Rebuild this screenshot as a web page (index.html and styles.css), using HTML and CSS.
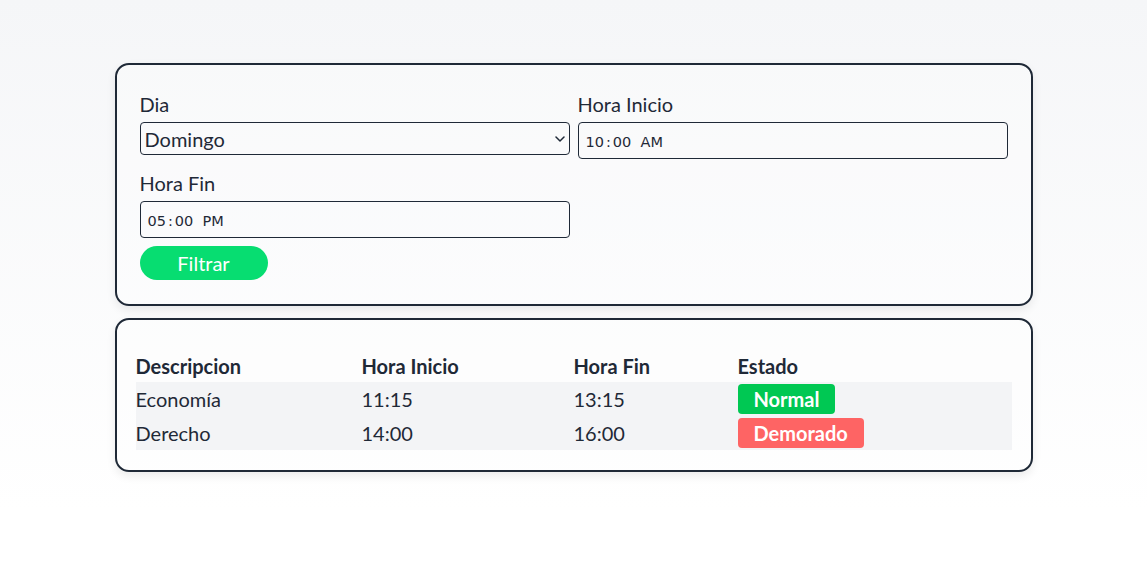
FILE: index.html
```html
<!DOCTYPE html>
<html lang="es">
<head>
<meta charset="utf-8">
<title>Horarios</title>
<link rel="stylesheet" href="styles.css">
</head>
<body>
<main class="page">
  <section class="card filter-card">
    <form class="filter-form">
      <div class="field">
        <label class="label" for="dia">Dia</label>
        <div class="select-wrap">
          <select id="dia" class="select">
            <option>Domingo</option>
            <option>Lunes</option>
          </select>
          <svg class="chev" width="10" height="6" viewBox="0 0 10 6"><path d="M1 1l4 4 4-4" fill="none" stroke="#1f2937" stroke-width="1.5" stroke-linecap="round" stroke-linejoin="round"/></svg>
        </div>
      </div>
      <div class="field">
        <label class="label" for="ini">Hora Inicio</label>
        <div class="input">10<span class="sep">:</span>00&nbsp;&nbsp;AM</div>
      </div>
      <div class="field">
        <label class="label" for="fin">Hora Fin</label>
        <div class="input">05<span class="sep">:</span>00&nbsp;&nbsp;PM</div>
      </div>
      <div class="actions">
        <button type="button" class="btn">Filtrar</button>
      </div>
    </form>
  </section>
  <section class="card table-card">
    <table class="table">
      <thead>
        <tr>
          <th class="c1">Descripcion</th>
          <th class="c2">Hora Inicio</th>
          <th class="c3">Hora Fin</th>
          <th class="c4">Estado</th>
        </tr>
      </thead>
      <tbody>
        <tr>
          <td>Economía</td>
          <td>11:15</td>
          <td>13:15</td>
          <td><span class="badge ok">Normal</span></td>
        </tr>
        <tr>
          <td>Derecho</td>
          <td>14:00</td>
          <td>16:00</td>
          <td><span class="badge late">Demorado</span></td>
        </tr>
      </tbody>
    </table>
  </section>
</main>
</body>
</html>
```
FILE: styles.css
```css
html, body {
  margin: 0;
  padding: 0;
}
body {
  min-height: 566px;
  background: linear-gradient(#f5f6f8, #ffffff 90%);
  font-family: Lato, "Noto Sans", sans-serif;
  color: #1f2937;
}
.page {
  width: 918px;
  margin: 63px auto 0;
  display: flex;
  flex-direction: column;
  gap: 12px;
}
.card {
  border: 2px solid #1f2937;
  border-radius: 14px;
  box-shadow: 0 4px 10px rgba(0, 0, 0, 0.08);
  background: rgba(255, 255, 255, 0.25);
}
.filter-card {
  padding: 25px 23px 24px;
}
.filter-form {
  display: grid;
  grid-template-columns: 1fr 1fr;
  column-gap: 8px;
  row-gap: 10px;
}
.field {
  display: flex;
  flex-direction: column;
  gap: 4px;
}
.label {
  font-size: 20px;
  line-height: 28px;
}
.select-wrap {
  position: relative;
}
.select {
  appearance: none;
  -webkit-appearance: none;
  width: 100%;
  height: 33px;
  box-sizing: border-box;
  border: 1px solid #1f2937;
  border-radius: 4px;
  background: transparent;
  font-family: Lato, "Noto Sans", sans-serif;
  font-size: 20px;
  color: #1f2937;
  padding: 0 4px;
  margin: 0;
}
.chev {
  position: absolute;
  right: 5px;
  top: 14px;
  pointer-events: none;
}
.input {
  height: 37px;
  box-sizing: border-box;
  border: 1px solid #1f2937;
  border-radius: 4px;
  font-family: "DejaVu Sans", sans-serif;
  font-size: 14.5px;
  display: flex;
  align-items: center;
  padding: 2px 7px 0;
  color: #1f2937;
}
.sep {
  padding: 0 2px;
}
.actions {
  grid-column: 1 / 2;
  margin-top: -2px;
}
.btn {
  width: 128px;
  height: 34px;
  border: none;
  border-radius: 17px;
  background: #07dd71;
  color: #fff;
  font-family: Lato, "Noto Sans", sans-serif;
  font-size: 20px;
  padding: 0;
}
.table-card {
  padding: 28px 19px 20px;
}
.table {
  width: 100%;
  border-collapse: collapse;
  font-size: 20px;
}
.table th {
  text-align: left;
  font-weight: 700;
  height: 34px;
  padding: 2px 0 0;
  box-sizing: border-box;
}
.table td {
  height: 34px;
  padding: 0;
}
.table tbody tr {
  background: #f3f4f6;
}
.c1 { width: 226px; }
.c2 { width: 212px; }
.c3 { width: 164px; }
.badge {
  display: inline-block;
  height: 30px;
  line-height: 30px;
  padding: 0 16px;
  border-radius: 4px;
  color: #fff;
  font-weight: 700;
  vertical-align: middle;
}
.ok { background: #00c853; }
.late { background: #fe6464; }
```
